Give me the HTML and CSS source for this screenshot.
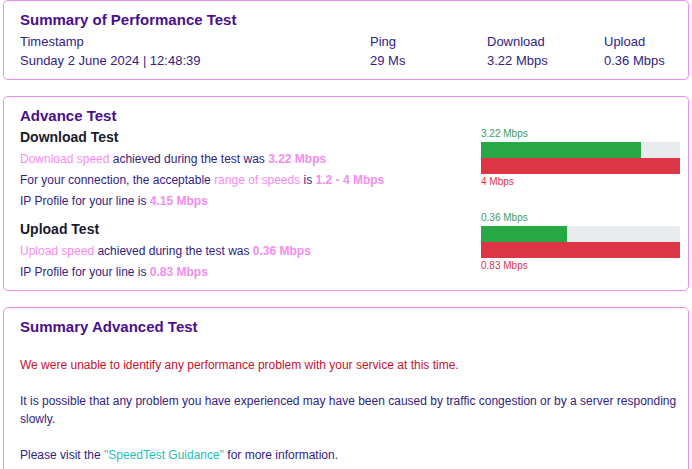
FILE: index.html
```html
<!DOCTYPE html>
<html lang="en">
<head>
<meta charset="utf-8">
<title>Summary of Performance Test</title>
<link rel="stylesheet" href="styles.css">
</head>
<body>
<div class="page">
  <section class="card summary">
    <h2 class="card-title">Summary of Performance Test</h2>
    <div class="stats">
      <div class="stat">
        <div>Timestamp</div>
        <div>Sunday 2 June 2024 | 12:48:39</div>
      </div>
      <div class="stat">
        <div>Ping</div>
        <div>29 Ms</div>
      </div>
      <div class="stat">
        <div>Download</div>
        <div>3.22 Mbps</div>
      </div>
      <div class="stat">
        <div>Upload</div>
        <div>0.36 Mbps</div>
      </div>
    </div>
  </section>

  <section class="card advance">
    <h2 class="card-title">Advance Test</h2>
    <div class="advance-body">
      <div class="tests">
        <h3 class="test-title">Download Test</h3>
        <p class="line"><span class="hl">Download speed</span> achieved during the test was <b class="hl">3.22 Mbps</b></p>
        <p class="line">For your connection, the acceptable <span class="hl">range of speeds</span> is <b class="hl">1.2 - 4 Mbps</b></p>
        <p class="line">IP Profile for your line is <b class="hl">4.15 Mbps</b></p>
        <h3 class="test-title upload">Upload Test</h3>
        <p class="line"><span class="hl">Upload speed</span> achieved during the test was <b class="hl">0.36 Mbps</b></p>
        <p class="line">IP Profile for your line is <b class="hl">0.83 Mbps</b></p>
      </div>
      <div class="bars">
        <div class="bar-group">
          <div class="bar-label good">3.22 Mbps</div>
          <div class="track"><div class="fill" style="width:80.5%"></div></div>
          <div class="limit"></div>
          <div class="bar-label bad">4 Mbps</div>
        </div>
        <div class="bar-group">
          <div class="bar-label good">0.36 Mbps</div>
          <div class="track"><div class="fill" style="width:43.4%"></div></div>
          <div class="limit"></div>
          <div class="bar-label bad">0.83 Mbps</div>
        </div>
      </div>
    </div>
  </section>

  <section class="card result">
    <h2 class="card-title">Summary Advanced Test</h2>
    <p class="para alert">We were unable to identify any performance problem with your service at this time.</p>
    <p class="para">It is possible that any problem you have experienced may have been caused by traffic congestion or by a server responding slowly.</p>
    <p class="para">Please visit the <a class="guide" href="#">"SpeedTest Guidance"</a> for more information.</p>
  </section>
</div>
</body>
</html>
```

FILE: styles.css
```css
html, body {
  margin: 0;
  padding: 0;
  background: #ffffff;
}

body {
  font-family: "Liberation Sans", Arial, sans-serif;
  color: #33227f;
}

.page {
  padding: 0 3px 0 3px;
  display: flex;
  flex-direction: column;
  gap: 16px;
}

.card {
  border: 1px solid #f08cf0;
  border-radius: 5px;
  background: #ffffff;
}

.card-title {
  margin: 0;
  font-size: 15px;
  line-height: 20px;
  font-weight: bold;
  color: #4a0f8c;
}

/* Summary card */
.summary {
  padding: 9px 16px 9px 16px;
}

.stats {
  display: grid;
  grid-template-columns: 350px 117px 117px 1fr;
  margin-top: 2px;
  font-size: 13px;
  line-height: 19px;
}

/* Advance card */
.advance {
  padding: 9px 8px 7px 16px;
}

.advance-body {
  display: grid;
  grid-template-columns: 1fr 199px;
}

.tests {
  font-size: 12px;
}

.test-title {
  margin: 1px 0 2px 0;
  font-size: 14px;
  line-height: 20px;
  font-weight: bold;
  color: #1a1a2e;
}

.test-title.upload {
  margin-top: 7px;
}

.line {
  margin: 0;
  line-height: 21px;
}

.hl {
  color: #f58cf0;
}

b.hl {
  font-weight: bold;
}

.bars {
  display: flex;
  flex-direction: column;
  gap: 24px;
  padding-top: 2px;
}

.bar-group {
  display: flex;
  flex-direction: column;
  gap: 2px;
}

.bar-label {
  font-size: 10px;
  line-height: 12px;
}

.bar-label.good {
  color: #3f9a63;
}

.bar-label.bad {
  color: #dc3545;
}

.track {
  height: 16px;
  background: #e9ecef;
}

.fill {
  height: 100%;
  background: #28a745;
}

.limit {
  height: 16px;
  background: #dc3545;
  margin-top: -2px;
}

/* Result card */
.result {
  padding: 9px 8px 10px 16px;
}

.para {
  margin: 18px 0 0 0;
  font-size: 12px;
  line-height: 18px;
}

.alert {
  margin-top: 19px;
  color: #c4122f;
}

.guide {
  color: #1fbfba;
  text-decoration: none;
}
```
